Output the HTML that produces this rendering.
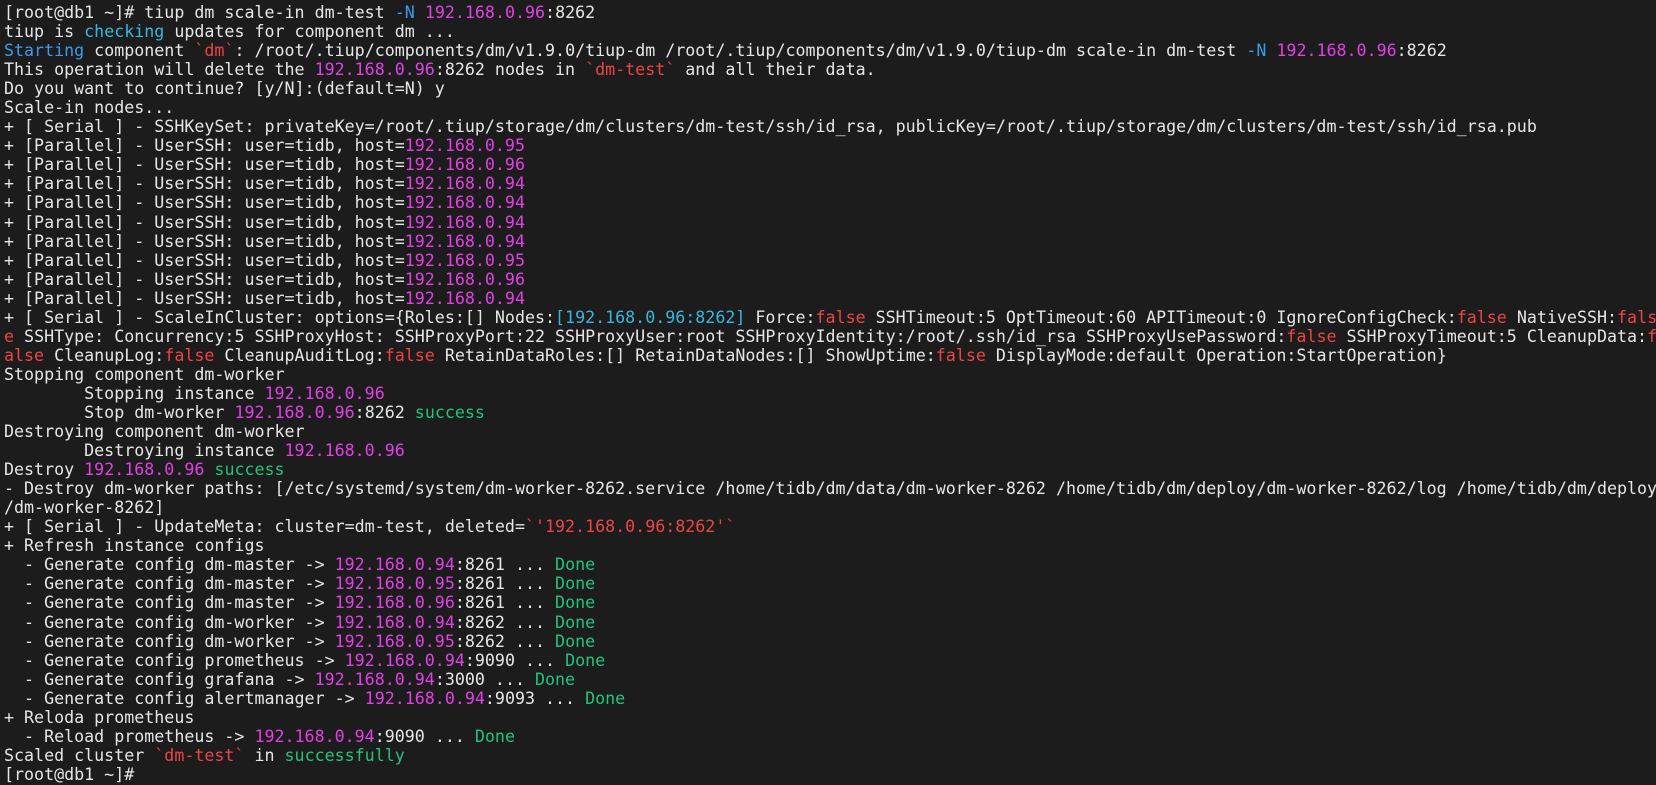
<!DOCTYPE html>
<html><head><meta charset="utf-8"><style>
html,body{margin:0;padding:0;background:#1c1c1c;width:1656px;height:785px;overflow:hidden}
pre{margin:0;padding:3px 0 0 4px;font-family:"DejaVu Sans Mono","Liberation Mono",monospace;font-size:16.65px;line-height:19.05px;color:#e6e6e6;white-space:pre}
.m{color:#e23fe6}.c{color:#36b6e0}.b{color:#3a9ce8}.r{color:#ee4444}.g{color:#1fc47f}
</style></head><body><pre>[root@db1 ~]# tiup dm scale-in dm-test <span class="b">-N</span> <span class="m">192.168.0.96</span>:8262
tiup is <span class="c">checking</span> updates for component dm ...
<span class="b">Starting</span> component <span class="r">`dm`</span>: /root/.tiup/components/dm/v1.9.0/tiup-dm /root/.tiup/components/dm/v1.9.0/tiup-dm scale-in dm-test <span class="b">-N</span> <span class="m">192.168.0.96</span>:8262
This operation will delete the <span class="m">192.168.0.96</span>:8262 nodes in <span class="r">`dm-test`</span> and all their data.
Do you want to continue? [y/N]:(default=N) y
Scale-in nodes...
+ [ Serial ] - SSHKeySet: privateKey=/root/.tiup/storage/dm/clusters/dm-test/ssh/id_rsa, publicKey=/root/.tiup/storage/dm/clusters/dm-test/ssh/id_rsa.pub
+ [Parallel] - UserSSH: user=tidb, host=<span class="m">192.168.0.95</span>
+ [Parallel] - UserSSH: user=tidb, host=<span class="m">192.168.0.96</span>
+ [Parallel] - UserSSH: user=tidb, host=<span class="m">192.168.0.94</span>
+ [Parallel] - UserSSH: user=tidb, host=<span class="m">192.168.0.94</span>
+ [Parallel] - UserSSH: user=tidb, host=<span class="m">192.168.0.94</span>
+ [Parallel] - UserSSH: user=tidb, host=<span class="m">192.168.0.94</span>
+ [Parallel] - UserSSH: user=tidb, host=<span class="m">192.168.0.95</span>
+ [Parallel] - UserSSH: user=tidb, host=<span class="m">192.168.0.96</span>
+ [Parallel] - UserSSH: user=tidb, host=<span class="m">192.168.0.94</span>
+ [ Serial ] - ScaleInCluster: options={Roles:[] Nodes:<span class="c">[192.168.0.96:8262]</span> Force:<span class="r">false</span> SSHTimeout:5 OptTimeout:60 APITimeout:0 IgnoreConfigCheck:<span class="r">false</span> NativeSSH:<span class="r">fals</span>
<span class="r">e</span> SSHType: Concurrency:5 SSHProxyHost: SSHProxyPort:22 SSHProxyUser:root SSHProxyIdentity:/root/.ssh/id_rsa SSHProxyUsePassword:<span class="r">false</span> SSHProxyTimeout:5 CleanupData:<span class="r">f</span>
<span class="r">alse</span> CleanupLog:<span class="r">false</span> CleanupAuditLog:<span class="r">false</span> RetainDataRoles:[] RetainDataNodes:[] ShowUptime:<span class="r">false</span> DisplayMode:default Operation:StartOperation}
Stopping component dm-worker
        Stopping instance <span class="m">192.168.0.96</span>
        Stop dm-worker <span class="m">192.168.0.96</span>:8262 <span class="g">success</span>
Destroying component dm-worker
        Destroying instance <span class="m">192.168.0.96</span>
Destroy <span class="m">192.168.0.96</span> <span class="g">success</span>
- Destroy dm-worker paths: [/etc/systemd/system/dm-worker-8262.service /home/tidb/dm/data/dm-worker-8262 /home/tidb/dm/deploy/dm-worker-8262/log /home/tidb/dm/deploy
/dm-worker-8262]
+ [ Serial ] - UpdateMeta: cluster=dm-test, deleted=<span class="r">`'192.168.0.96:8262'`</span>
+ Refresh instance configs
  - Generate config dm-master -&gt; <span class="m">192.168.0.94</span>:8261 ... <span class="g">Done</span>
  - Generate config dm-master -&gt; <span class="m">192.168.0.95</span>:8261 ... <span class="g">Done</span>
  - Generate config dm-master -&gt; <span class="m">192.168.0.96</span>:8261 ... <span class="g">Done</span>
  - Generate config dm-worker -&gt; <span class="m">192.168.0.94</span>:8262 ... <span class="g">Done</span>
  - Generate config dm-worker -&gt; <span class="m">192.168.0.95</span>:8262 ... <span class="g">Done</span>
  - Generate config prometheus -&gt; <span class="m">192.168.0.94</span>:9090 ... <span class="g">Done</span>
  - Generate config grafana -&gt; <span class="m">192.168.0.94</span>:3000 ... <span class="g">Done</span>
  - Generate config alertmanager -&gt; <span class="m">192.168.0.94</span>:9093 ... <span class="g">Done</span>
+ Reloda prometheus
  - Reload prometheus -&gt; <span class="m">192.168.0.94</span>:9090 ... <span class="g">Done</span>
Scaled cluster <span class="r">`dm-test`</span> in <span class="g">successfully</span>
[root@db1 ~]#</pre></body></html>
